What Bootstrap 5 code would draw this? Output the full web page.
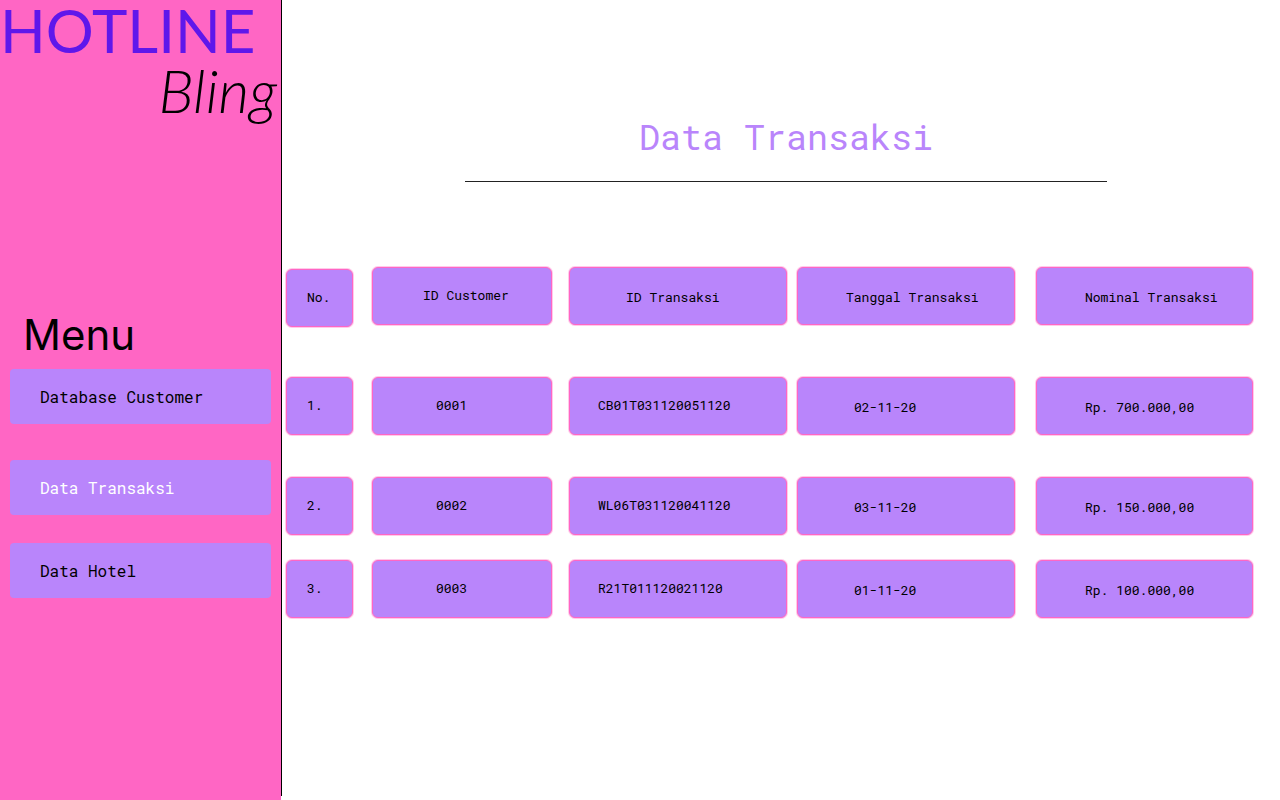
<!DOCTYPE html>
<html lang="id">
<head>
<meta charset="utf-8">
<meta name="viewport" content="width=device-width, initial-scale=1">
<title>Data Transaksi</title>
<link href="https://cdn.jsdelivr.net/npm/bootstrap@5.3.0/dist/css/bootstrap.min.css" rel="stylesheet">
<style>
  :root { --pink: #ff66c4; --violet: #b985fb; --mono: "Roboto Mono", "DejaVu Sans Mono", monospace; }
  body { font-family: var(--mono); color: #000; background: #fff; }
  .sidebar { flex: 0 0 281px; background: var(--pink); }
  .brand-main { font: 400 60px/60px Lato, sans-serif; color: #5e17eb; }
  .brand-script { font: italic 300 60px/60px Lato, sans-serif; color: #000; padding-right: 4px; }
  .menu-title { font: 400 42px/48px Inter, sans-serif; margin-top: 191px; padding-left: 23px; }
  .menu-list { padding: 10px 10px 0; }
  .menu-link { height: 55px; padding-left: 30px; margin-bottom: 28px; border-radius: 4px; background: var(--violet); color: #000; font-size: 16px; }
  .menu-link:first-child { margin-bottom: 36px; }
  .menu-link.active { color: #fff; }
  .menu-link:hover { filter: brightness(1.05); }
  .main-area { border-left: 1px solid #000; min-height: calc(100vh - 4px); margin-bottom: 4px; }
  .page-head { padding: 112px 0 0 10px; }
  .page-title { font-size: 35px; line-height: 48px; color: var(--violet); }
  .title-rule { width: 65%; margin: 21px auto 0; border-top: 1px solid #222; opacity: 1; }
  .data-wrap { padding: 85px 27px 0 4px; }
  .data-grid { display: block; font-size: 13px; }
  .data-grid thead, .data-grid tbody { display: block; }
  .data-grid tr { display: grid; grid-template-columns: 86fr 197fr 228fr 239fr 217fr; margin-bottom: 25px; }
  .data-grid thead tr { margin-bottom: 50px; }
  .data-grid tbody tr:first-child { margin-bottom: 42px; }
  .data-grid th, .data-grid td {
    display: flex; align-items: center; height: 58px; font-weight: 400; white-space: nowrap;
    background: var(--violet); border: 1px solid var(--pink); border-radius: 6px;
    box-shadow: 0 0 0 1px rgba(255, 102, 196, .35);
  }
  .data-grid .c-no { margin-right: 19px; padding-left: 20px; }
  .data-grid .c-cust { margin-right: 17px; padding-left: 63px; }
  .data-grid .c-trx { margin-right: 10px; padding-left: 28px; }
  .data-grid .c-date { margin-right: 21px; padding-left: 56px; padding-top: 4px; }
  .data-grid .c-sum { padding-left: 48px; padding-top: 4px; }
  .data-grid th.c-no { margin-top: 2px; }
  .data-grid th.c-cust { padding-left: 50px; }
  .data-grid th.c-trx { padding-left: 56px; padding-top: 4px; }
  .data-grid th.c-date { padding-left: 48px; }
</style>
</head>
<body>
<div class="d-flex min-vh-100">
  <aside class="sidebar">
    <header>
      <div class="brand-main">HOTLINE</div>
      <div class="brand-script text-end">Bling</div>
    </header>
    <h2 class="menu-title mb-0">Menu</h2>
    <nav class="menu-list d-flex flex-column" aria-label="Menu">
      <a class="menu-link d-flex align-items-center text-decoration-none" href="#customer">Database Customer</a>
      <a class="menu-link active d-flex align-items-center text-decoration-none" href="#transaksi" aria-current="page">Data Transaksi</a>
      <a class="menu-link d-flex align-items-center text-decoration-none" href="#hotel">Data Hotel</a>
    </nav>
  </aside>
  <main class="main-area flex-grow-1">
    <div class="page-head">
      <h1 class="page-title text-center fw-normal mb-0">Data Transaksi</h1>
      <hr class="title-rule">
    </div>
    <div class="data-wrap">
      <table class="data-grid w-100">
        <thead>
          <tr><th class="c-no" scope="col">No.</th><th class="c-cust" scope="col">ID Customer</th><th class="c-trx" scope="col">ID Transaksi</th><th class="c-date" scope="col">Tanggal Transaksi</th><th class="c-sum" scope="col">Nominal Transaksi</th></tr>
        </thead>
        <tbody>
          <tr><td class="c-no">1.</td><td class="c-cust">0001</td><td class="c-trx">CB01T031120051120</td><td class="c-date">02-11-20</td><td class="c-sum">Rp. 700.000,00</td></tr>
          <tr><td class="c-no">2.</td><td class="c-cust">0002</td><td class="c-trx">WL06T031120041120</td><td class="c-date">03-11-20</td><td class="c-sum">Rp. 150.000,00</td></tr>
          <tr><td class="c-no">3.</td><td class="c-cust">0003</td><td class="c-trx">R21T011120021120</td><td class="c-date">01-11-20</td><td class="c-sum">Rp. 100.000,00</td></tr>
        </tbody>
      </table>
    </div>
  </main>
</div>
<script src="https://cdn.jsdelivr.net/npm/bootstrap@5.3.0/dist/js/bootstrap.bundle.min.js"></script>
</body>
</html>
